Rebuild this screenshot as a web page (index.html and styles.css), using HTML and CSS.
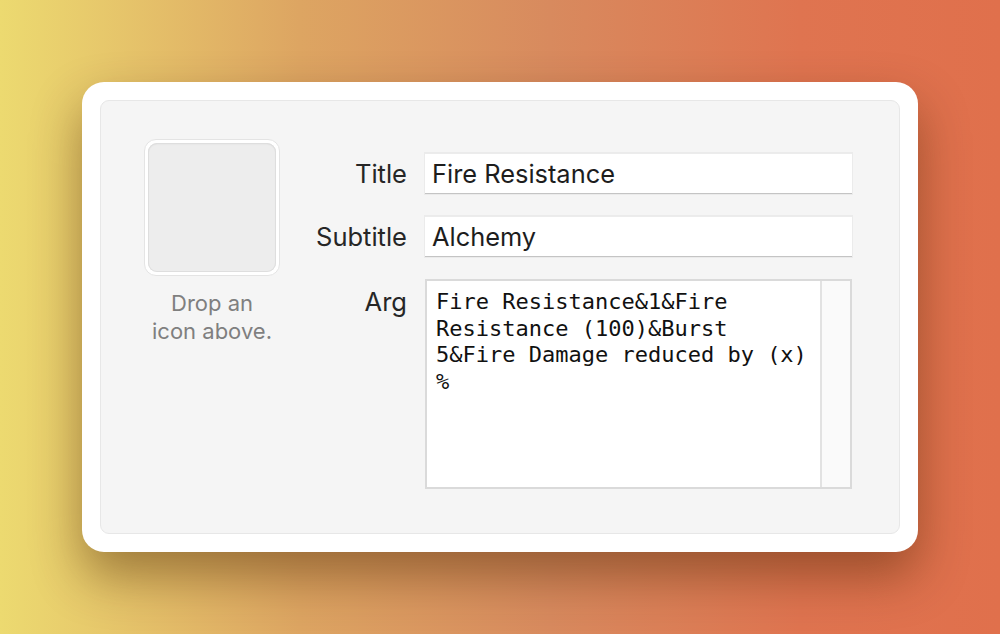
FILE: index.html
```html
<!DOCTYPE html>
<html>
<head>
<meta charset="utf-8">
<link rel="stylesheet" href="styles.css">
</head>
<body>
<div class="card">
  <div class="panel">
    <div class="icon-col">
      <div class="well"><div class="well-inner"></div></div>
      <div class="caption">Drop an<br>icon above.</div>
    </div>
    <div class="form">
      <div class="label">Title</div>
      <div class="field">Fire Resistance</div>
      <div class="label">Subtitle</div>
      <div class="field">Alchemy</div>
      <div class="label label-top">Arg</div>
      <div class="textarea">
        <div class="mono">Fire Resistance&amp;1&amp;Fire
Resistance (100)&amp;Burst
5&amp;Fire Damage reduced by (x)
%</div>
        <div class="scroll"></div>
      </div>
    </div>
  </div>
</div>
</body>
</html>
```
FILE: styles.css
```css
html, body {
  margin: 0;
  height: 100%;
}
body {
  background: linear-gradient(90deg, #ecda70 0%, #dda562 30%, #d88a5e 55%, #df7450 80%, #e0704c 100%);
  display: flex;
  align-items: center;
  justify-content: center;
  font-family: Inter, "Liberation Sans", sans-serif;
}
.card {
  width: 836px;
  height: 470px;
  box-sizing: border-box;
  background: #fff;
  border-radius: 22px;
  padding: 18px;
  box-shadow: 0 24px 50px rgba(70, 35, 0, 0.45);
}
.panel {
  height: 100%;
  box-sizing: border-box;
  background: #f5f5f5;
  border: 1px solid #e7e7e7;
  border-radius: 9px;
  display: flex;
  padding: 38px 47px 0 43px;
  gap: 20px;
}
.icon-col {
  width: 136px;
  display: flex;
  flex-direction: column;
  align-items: center;
}
.well {
  width: 136px;
  height: 137px;
  box-sizing: border-box;
  background: #fff;
  border: 1px solid #e4e4e4;
  border-radius: 12px;
  padding: 3px;
}
.well-inner {
  height: 100%;
  background: #ededed;
  border-radius: 9px;
  box-shadow: inset 0 0 0 1px #dedede, inset 0 1px 2px rgba(0,0,0,0.08);
}
.caption {
  margin-top: 13px;
  text-align: center;
  color: #7f7f7f;
  font-size: 22px;
  line-height: 28px;
  white-space: nowrap;
}
.form {
  flex: 1;
  display: grid;
  grid-template-columns: 1fr 427px;
  column-gap: 18px;
  row-gap: 22px;
  padding-top: 14px;
  align-content: start;
}
.label {
  text-align: right;
  color: #262626;
  font-size: 25.5px;
  align-self: center;
  line-height: 30px;
  white-space: nowrap;
}
.label-top {
  align-self: start;
  padding-top: 8px;
}
.field {
  height: 41px;
  box-sizing: border-box;
  background: #fff;
  border-top: 1px solid #ececec;
  border-bottom: 1px solid #c4c4c4;
  box-shadow: 0 0 0 1px #ebebeb;
  padding: 0 7px;
  font-size: 25.4px;
  line-height: 40px;
  color: #1d1d1d;
}
.textarea {
  height: 210px;
  box-sizing: border-box;
  background: #fff;
  border: 2px solid #dadada;
  display: flex;
}
.mono {
  flex: 1;
  white-space: pre;
  font-family: "DejaVu Sans Mono", "Liberation Mono", monospace;
  font-size: 22px;
  line-height: 26.7px;
  color: #111;
  padding: 8px 0 0 9px;
}
.scroll {
  width: 28px;
  background: #fafafa;
  border-left: 2px solid #e2e2e2;
}
```
